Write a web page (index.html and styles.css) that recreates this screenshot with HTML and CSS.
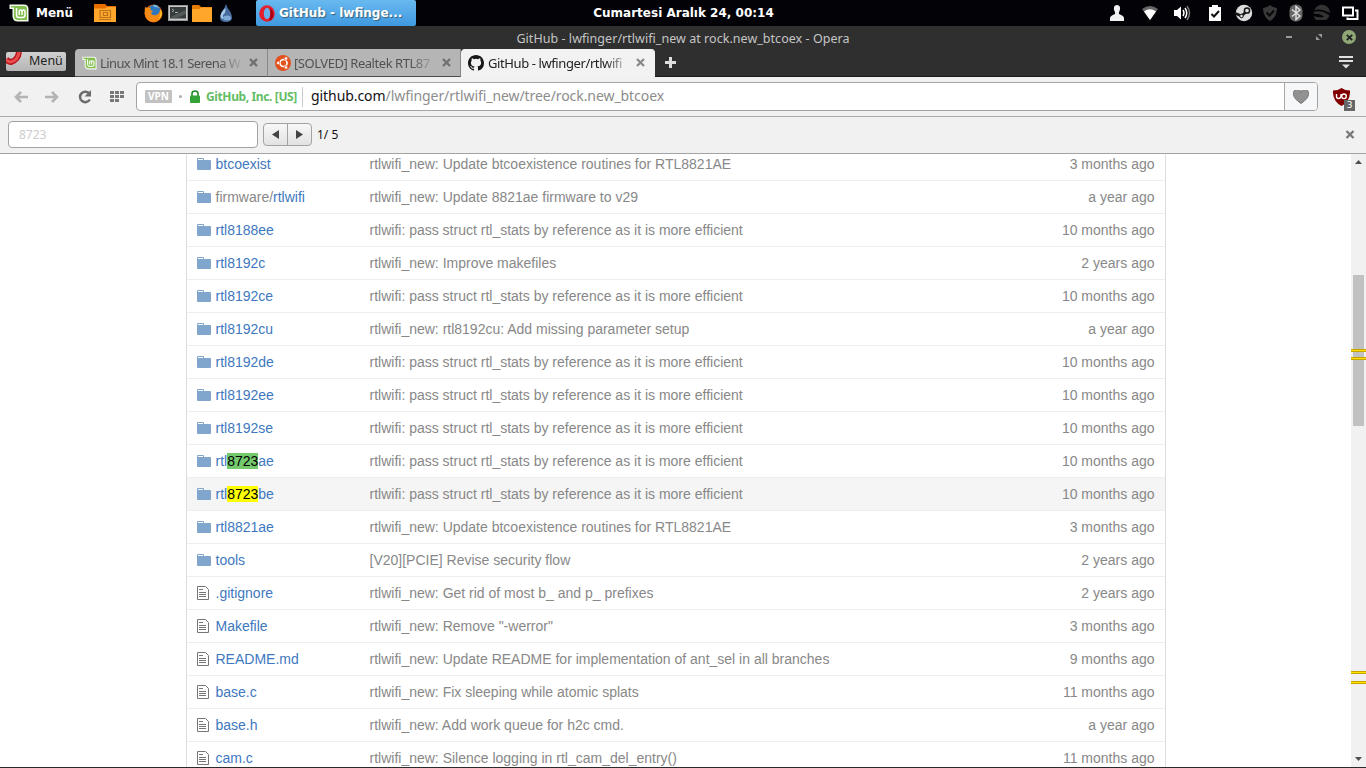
FILE: index.html
```
<!DOCTYPE html>
<html lang="tr">

<head>
    <meta charset="UTF-8">
    <meta name="viewport" content="width=device-width, initial-scale=1.0">
    <title>GitHub - lwfinger/rtlwifi_new at rock.new_btcoex - Opera</title>
    <link rel="stylesheet" href="styles.css">
</head>

<body>
    <svg class="symbols">
        <symbol id="mint" viewBox="0 0 20 18">
            <path d="M.5.5H15Q19.5.5 19.5 5V17.500H9Q3.500 17.500 3.500 12V5H.5Z" fill="#f4f9ee"/>
            <path d="M2 2H15Q18 2 18 5V16H9Q5 16 5 12V3.500H2Z" fill="#82be4c"/>
            <path d="M7.500 4V11Q7.500 13.500 10 13.500H13.500Q16 13.500 16 11V7.500Q16 6 14.500 6T13 7.500V11M13 7.500Q13 6 11.600 6T10.200 7.500V11" fill="none" stroke="#fff" stroke-width="1.500"/>
        </symbol>
        <symbol id="folder" viewBox="0 0 20 17">
            <path d="M0 1Q0 0 1 0H7L9 2H20V6H0Z" fill="#e67a00"/>
            <path d="M0 4H7L9 2.500H20V17H0Z" fill="#ffa62b"/>
        </symbol>
        <symbol id="close" viewBox="0 0 9 9">
            <path d="M1 1L8 8M8 1L1 8" stroke="currentColor" stroke-width="2.300"/>
        </symbol>
        <symbol id="arrow" viewBox="0 0 14 12">
            <path d="M7 1L2 6L7 11M2 6H14" fill="none" stroke="#b4b4b4" stroke-width="2.600"/>
        </symbol>
        <symbol id="dir" viewBox="0 0 14 12">
            <path d="M0 1Q0 0 1 0H6Q7 0 7 1V2H13Q14 2 14 3V11Q14 12 13 12H1Q0 12 0 11ZM1 1V2H6V1Z" fill="#80a6cd" fill-rule="evenodd"/>
        </symbol>
        <symbol id="file" viewBox="0 0 12 14">
            <path d="M.5.5H8.500L11.500 3.500V13.500H.5Z" fill="#fff" stroke="#767676"/>
            <path d="M2 3.500H6M2 6.500H9M2 8.500H9M2 10.500H9" stroke="#767676"/>
        </symbol>
    </svg>

    <div class="panel">
        <div class="launchers">
            <svg class="mint"><use href="#mint"/></svg>
            <span class="menuLabel">Menü</span>
            <span class="desktopFolder">
                <svg width="22" height="18" viewBox="0 0 22 18">
                    <path d="M0 1Q0 0 1 0H11L13 2H22V6H0Z" fill="#e66f00"/>
                    <path d="M0 4.500H11L13 3H22V18H0Z" fill="#ffa62b"/>
                    <path d="M6 6.500H16.500V13.500H6ZM9.500 8.500H13.500V11.500H9.500ZM5 15.500H17" fill="none" stroke="#b8741a" stroke-width="1.200"/>
                </svg>
            </span>
            <svg class="firefox" width="19" height="19" viewBox="0 0 19 19">
                <circle cx="9.500" cy="9.500" r="9" fill="#e66000"/>
                <circle cx="10" cy="8" r="7" fill="#2f77bd"/>
                <path d="M9 1Q13 0 15 4L12 3Q10 4 9 1Z" fill="#75b9e8"/>
                <path d="M1 3L3 4Q5 3 7 4L6 6L9 7L7 9Q8 12 12 11Q16 10 16 5Q19 8 17.500 12Q15 18 9 18Q2 17 .8 10Q.5 6 1 3Z" fill="#f58a14"/>
                <path d="M17 6Q19 12 14 16Q17 12 16.500 7Z" fill="#ffd637"/>
            </svg>
            <svg class="terminal" width="20" height="16" viewBox="0 0 20 16">
                <rect x=".5" y=".5" width="19" height="15" fill="#c9c9c9" stroke="#999"/>
                <rect x="2" y="2" width="16" height="11.500" fill="#363b3b"/>
                <path d="M4 4L6 5.500L4 7M7 7.500H10" fill="none" stroke="#aaa"/>
                <path d="M2 12L18 5V9L8 13.500Z" fill="#525858"/>
            </svg>
            <svg class="files" width="20" height="17"><use href="#folder"/></svg>
            <svg class="drop" width="16" height="18" viewBox="0 0 16 18">
                <path d="M8 0Q9 4 12.500 8Q17 18 8 18Q-1 18 3.500 8Q7 4 8 0Z" fill="#446b9b"/>
                <path d="M7.500 4Q8 9 5 11Q4 14 7 14Q3 16 2.500 12Q3 8 7.500 4Z" fill="#aac9e8"/>
                <ellipse cx="9" cy="14" rx="4" ry="2.500" fill="#7fa7d4"/>
            </svg>
            <div class="task">
                <svg width="16" height="17" viewBox="0 0 16 17">
                    <ellipse cx="8" cy="8.500" rx="7.800" ry="8.200" fill="#e4202c"/>
                    <ellipse cx="8" cy="8.500" rx="3.200" ry="5.800" fill="#63b2ec"/>
                    <path d="M11.200 3Q15.500 7 14 12Q13 15 10 16Q12 12 11.200 3Z" fill="#a70014"/>
                </svg>
                <span>GitHub - lwfinge...</span>
            </div>
        </div>
        <div class="clock">Cumartesi Aralık 24, 00:14</div>
        <div class="tray">
            <svg viewBox="0 0 20 20">
                <path d="M10 2C13.500 2 13.500 6 12.500 8Q11.500 10 12 11Q17 13 17 15V18H3V15Q3 13 8 11Q8.500 10 7.500 8C6.500 6 6.500 2 10 2Z" fill="#f2f2f2"/>
            </svg>
            <svg viewBox="0 0 20 20">
                <path d="M2 6Q10 0 18 6L10 17Z" fill="#666"/>
                <path d="M4 8.500Q10 4 16 8.500L10 17Z" fill="#fff"/>
            </svg>
            <svg viewBox="0 0 20 20">
                <path d="M2 7H5L9 3.500V16.500L5 13H2Z" fill="#fff"/>
                <path d="M11 7Q13 10 11 13M13 5Q16.500 10 13 15" fill="none" stroke="#fff" stroke-width="1.500"/>
                <path d="M15 3Q20 10 15 17" fill="none" stroke="#777" stroke-width="1.500"/>
            </svg>
            <svg viewBox="0 0 20 20">
                <path d="M4 4H7V2H13V4H16V18H4Z" fill="#fff"/>
                <path d="M6.500 11L9 13.500L14 8" fill="none" stroke="#111" stroke-width="2"/>
            </svg>
            <svg viewBox="0 0 20 20">
                <circle cx="10" cy="10" r="8.200" fill="#dcdcdc"/>
                <path d="M1.700 10.500L7.500 13L13 8" fill="none" stroke="#151515" stroke-width="2.500"/>
                <circle cx="13" cy="7.500" r="2.600" fill="#dcdcdc" stroke="#151515" stroke-width="1.500"/>
                <circle cx="7.500" cy="13" r="1.800" fill="#dcdcdc" stroke="#151515"/>
            </svg>
            <svg viewBox="0 0 20 20">
                <path d="M10 2Q13 5 17 5Q17 14 10 18Q3 14 3 5Q7 5 10 2Z" fill="#393939"/>
                <path d="M6.500 9.500L9.500 12.500L14 7.500" fill="none" stroke="#080808" stroke-width="2"/>
            </svg>
            <svg viewBox="0 0 20 20">
                <rect x="3.500" y="1.500" width="13" height="17" rx="6" fill="#666"/>
                <path d="M6 6.500L14 13L10 16.500V3.500L14 7L6 13.500" fill="none" stroke="#e2e2e2" stroke-width="1.400"/>
            </svg>
            <svg viewBox="0 0 20 20">
                <path d="M2.500 7A8 8 0 0 1 18 10Q10 5 2.500 7ZM2 8.500Q11 7 17.500 12.500A8 8 0 0 1 14 17H4Q2 15 2 13Q6 15 12 14Q8 10 2 11Z" fill="#333"/>
            </svg>
            <svg viewBox="0 0 20 20">
                <path d="M3 4.500H13V12.500H3ZM15 7.500H17.500V16H7.500V14.500" fill="none" stroke="#fff" stroke-width="2"/>
            </svg>
        </div>
    </div>

    <div class="titleBar">
        <span class="windowTitle">GitHub - lwfinger/rtlwifi_new at rock.new_btcoex - Opera</span>
        <div class="windowButtons">
            <span class="minimize"></span>
            <svg width="6" height="6" viewBox="0 0 6 6"><path d="M2 0H6V4ZM0 2V6H4Z" fill="#999"/></svg>
            <span class="closeWindow"><svg width="7" height="7"><use href="#close"/></svg></span>
        </div>
    </div>

    <div class="tabBar">
        <div class="operaMenu">
            <svg width="18" height="15" viewBox="0 0 18 15">
                <path d="M13 0Q12 8 5 10Q2 10 0 7" fill="none" stroke="#b8121b" stroke-width="6"/>
                <path d="M13 0Q12 8 5 10Q2 10 0 7" fill="none" stroke="#e84d4d" stroke-width="3"/>
            </svg>
            <span>Menü</span>
        </div>
        <div class="tabs">
            <div class="tab">
                <svg class="tabIcon" width="15" height="14"><use href="#mint"/></svg>
                <span class="tabText mintText">Linux Mint 18.1 Serena W</span>
                <svg class="tabClose"><use href="#close"/></svg>
            </div>
            <div class="tab">
                <svg class="tabIcon" width="16" height="16" viewBox="0 0 16 16">
                    <circle cx="8" cy="8" r="8" fill="#e2501c"/>
                    <circle cx="8.500" cy="8" r="3.500" fill="none" stroke="#fff" stroke-width="1.700"/>
                    <g fill="#fff" stroke="#e2501c" stroke-width=".7">
                        <circle cx="3.200" cy="8" r="1.700"/>
                        <circle cx="11" cy="3.500" r="1.700"/>
                        <circle cx="11" cy="12.500" r="1.700"/>
                    </g>
                </svg>
                <span class="tabText solvedText">[SOLVED] Realtek RTL87</span>
                <svg class="tabClose"><use href="#close"/></svg>
            </div>
            <div class="tab active">
                <svg class="tabIcon" width="16" height="16" viewBox="0 0 16 16">
                    <path d="M8 0C3.580 0 0 3.580 0 8c0 3.540 2.290 6.530 5.470 7.590.4.070.55-.17.55-.38 0-.19-.01-.82-.01-1.490-2.010.37-2.530-.49-2.690-.94-.09-.23-.48-.94-.82-1.130-.28-.15-.68-.52-.01-.53.63-.01 1.080.58 1.230.82.72 1.210 1.870.87 2.330.66.07-.52.28-.87.51-1.070-1.780-.2-3.640-.89-3.640-3.950 0-.87.31-1.590.82-2.150-.08-.2-.36-1.020.08-2.120 0 0 .67-.21 2.200.82a7.600 7.600 0 0 1 4 0c1.530-1.040 2.200-.82 2.200-.82.44 1.100.16 1.920.08 2.120.51.56.82 1.270.82 2.150 0 3.070-1.870 3.750-3.650 3.950.29.25.54.73.54 1.480 0 1.070-.01 1.930-.01 2.200 0 .21.15.46.55.38A8 8 0 0 0 16 8c0-4.420-3.580-8-8-8Z" fill="#181616"/>
                </svg>
                <span class="tabText githubText">GitHub - lwfinger/rtlwifi</span>
                <svg class="tabClose"><use href="#close"/></svg>
            </div>
        </div>
        <svg class="newTab" width="11" height="11" viewBox="0 0 11 11"><path d="M5.500 0V11M0 5.500H11" stroke="#ddd" stroke-width="3"/></svg>
        <svg class="tabMenu" width="14" height="13" viewBox="0 0 14 13">
            <path d="M0 1H14M0 5H14" stroke="#e0e0e0" stroke-width="2"/>
            <path d="M3 8.500H11L7 12.500Z" fill="#e0e0e0"/>
        </svg>
    </div>

    <div class="toolBar">
        <svg class="back" width="14" height="12"><use href="#arrow"/></svg>
        <svg class="forward" width="14" height="12"><use href="#arrow"/></svg>
        <svg class="reload" width="14" height="14" viewBox="0 0 14 14">
            <path d="M11.500 4A5.200 5.200 0 1 0 11.800 9.500" fill="none" stroke="#6c6c6c" stroke-width="2.500"/>
            <path d="M13 0V6.500H6.500Z" fill="#6c6c6c"/>
        </svg>
        <svg class="speedDial" width="14" height="11" viewBox="0 0 14 11">
            <path d="M0 1.500H14M0 5.500H14M0 9.500H9" stroke="#777" stroke-width="3" stroke-dasharray="4 1"/>
        </svg>
        <div class="addressBar">
            <span class="vpn">VPN</span>
            <span class="dot"></span>
            <svg class="lock" width="10" height="13" viewBox="0 0 10 13">
                <path d="M2 6V3.500Q2 1 5 1T8 3.500V6" fill="none" stroke="#258a28" stroke-width="1.600"/>
                <rect y="5.500" width="10" height="7.500" rx="1" fill="#36a338"/>
            </svg>
            <span class="company">GitHub, Inc. [US]</span>
            <span class="url"><b>github.com</b>/lwfinger/rtlwifi_new/tree/rock.new_btcoex</span>
            <span class="heart">
                <svg width="16" height="14" viewBox="0 0 16 14"><path d="M8 13.500Q.5 8.500.5 4.300A3.800 3.800 0 0 1 8 2.500A3.800 3.800 0 0 1 15.500 4.300Q15.500 8.500 8 13.500Z" fill="#929292" stroke="#777"/></svg>
            </span>
        </div>
        <div class="ublock">
            <svg width="17" height="18" viewBox="0 0 17 18">
                <path d="M8.500 0Q12 2.500 17 2.500Q17.500 13 8.500 18Q-.5 13 0 2.500Q5 2.500 8.500 0Z" fill="#800000"/>
                <path d="M3.500 6V8.500Q3.500 10.500 5.500 10.500T8 8.500V6" fill="none" stroke="#fff" stroke-width="1.400"/>
                <circle cx="11" cy="8.300" r="2.300" fill="none" stroke="#fff" stroke-width="1.400"/>
            </svg>
            <span class="count">3</span>
        </div>
    </div>

    <div class="findBar">
        <div class="findInput">8723</div>
        <div class="findButtons">
            <span><svg width="7" height="9" viewBox="0 0 7 9"><path d="M7 0V9L0 4.500Z" fill="#444"/></svg></span>
            <span><svg width="7" height="9" viewBox="0 0 7 9"><path d="M0 0V9L7 4.500Z" fill="#444"/></svg></span>
        </div>
        <span class="matches">1/ 5</span>
        <svg class="findClose" width="10" height="9"><use href="#close"/></svg>
    </div>

    <div class="page">
        <div class="content">
            <div class="fileTable">
                <div class="row"><svg class="dir"><use href="#dir"/></svg><span class="name"><a>btcoexist</a></span><span class="message">rtlwifi_new: Update btcoexistence routines for RTL8821AE</span><span class="age">3 months ago</span></div>
                <div class="row"><svg class="dir"><use href="#dir"/></svg><span class="name">firmware/<a>rtlwifi</a></span><span class="message">rtlwifi_new: Update 8821ae firmware to v29</span><span class="age">a year ago</span></div>
                <div class="row"><svg class="dir"><use href="#dir"/></svg><span class="name"><a>rtl8188ee</a></span><span class="message">rtlwifi: pass struct rtl_stats by reference as it is more efficient</span><span class="age">10 months ago</span></div>
                <div class="row"><svg class="dir"><use href="#dir"/></svg><span class="name"><a>rtl8192c</a></span><span class="message">rtlwifi_new: Improve makefiles</span><span class="age">2 years ago</span></div>
                <div class="row"><svg class="dir"><use href="#dir"/></svg><span class="name"><a>rtl8192ce</a></span><span class="message">rtlwifi: pass struct rtl_stats by reference as it is more efficient</span><span class="age">10 months ago</span></div>
                <div class="row"><svg class="dir"><use href="#dir"/></svg><span class="name"><a>rtl8192cu</a></span><span class="message">rtlwifi_new: rtl8192cu: Add missing parameter setup</span><span class="age">a year ago</span></div>
                <div class="row"><svg class="dir"><use href="#dir"/></svg><span class="name"><a>rtl8192de</a></span><span class="message">rtlwifi: pass struct rtl_stats by reference as it is more efficient</span><span class="age">10 months ago</span></div>
                <div class="row"><svg class="dir"><use href="#dir"/></svg><span class="name"><a>rtl8192ee</a></span><span class="message">rtlwifi: pass struct rtl_stats by reference as it is more efficient</span><span class="age">10 months ago</span></div>
                <div class="row"><svg class="dir"><use href="#dir"/></svg><span class="name"><a>rtl8192se</a></span><span class="message">rtlwifi: pass struct rtl_stats by reference as it is more efficient</span><span class="age">10 months ago</span></div>
                <div class="row"><svg class="dir"><use href="#dir"/></svg><span class="name"><a>rtl<mark class="current">8723</mark>ae</a></span><span class="message">rtlwifi: pass struct rtl_stats by reference as it is more efficient</span><span class="age">10 months ago</span></div>
                <div class="row hovered"><svg class="dir"><use href="#dir"/></svg><span class="name"><a>rtl<mark>8723</mark>be</a></span><span class="message">rtlwifi: pass struct rtl_stats by reference as it is more efficient</span><span class="age">10 months ago</span></div>
                <div class="row"><svg class="dir"><use href="#dir"/></svg><span class="name"><a>rtl8821ae</a></span><span class="message">rtlwifi_new: Update btcoexistence routines for RTL8821AE</span><span class="age">3 months ago</span></div>
                <div class="row"><svg class="dir"><use href="#dir"/></svg><span class="name"><a>tools</a></span><span class="message">[V20][PCIE] Revise security flow</span><span class="age">2 years ago</span></div>
                <div class="row"><svg class="file"><use href="#file"/></svg><span class="name"><a>.gitignore</a></span><span class="message">rtlwifi_new: Get rid of most b_ and p_ prefixes</span><span class="age">2 years ago</span></div>
                <div class="row"><svg class="file"><use href="#file"/></svg><span class="name"><a>Makefile</a></span><span class="message">rtlwifi_new: Remove "-werror"</span><span class="age">3 months ago</span></div>
                <div class="row"><svg class="file"><use href="#file"/></svg><span class="name"><a>README.md</a></span><span class="message">rtlwifi_new: Update README for implementation of ant_sel in all branches</span><span class="age">9 months ago</span></div>
                <div class="row"><svg class="file"><use href="#file"/></svg><span class="name"><a>base.c</a></span><span class="message">rtlwifi_new: Fix sleeping while atomic splats</span><span class="age">11 months ago</span></div>
                <div class="row"><svg class="file"><use href="#file"/></svg><span class="name"><a>base.h</a></span><span class="message">rtlwifi_new: Add work queue for h2c cmd.</span><span class="age">a year ago</span></div>
                <div class="row"><svg class="file"><use href="#file"/></svg><span class="name"><a>cam.c</a></span><span class="message">rtlwifi_new: Silence logging in rtl_cam_del_entry()</span><span class="age">11 months ago</span></div>
            </div>
        </div>
        <div class="scrollBar">
            <svg width="7" height="4" viewBox="0 0 7 4"><path d="M0 4L3.500 0L7 4Z" fill="#505050"/></svg>
            <div class="thumb"></div>
            <svg width="7" height="4" viewBox="0 0 7 4"><path d="M0 0H7L3.500 4Z" fill="#505050"/></svg>
            <i class="tick tick1"></i>
            <i class="tick tick2"></i>
            <i class="tick tick3"></i>
            <i class="tick tick4"></i>
        </div>
    </div>
</body>

</html>
```
FILE: styles.css
```
* {
    box-sizing: border-box;
}

body {
    margin: 0;
    width: 1366px;
    height: 768px;
    overflow: hidden;
    display: flex;
    flex-direction: column;
    font-family: 'Noto Sans', sans-serif;
    background-color: #fff;
    border-bottom: 1px solid #2b2b2b;
}

svg {
    display: block;
    flex: none;
}

span {
    white-space: nowrap;
}

.symbols {
    display: none;
}

/* desktop panel */
.panel {
    height: 26px;
    flex: none;
    display: grid;
    grid-template-columns: 1fr auto 1fr;
    align-items: center;
    background-color: #020207;
    color: #fff;
    font: bold 12px 'DejaVu Sans', sans-serif;
}

.launchers {
    display: flex;
    align-items: center;
    height: 26px;
    padding-left: 9px;
}

.mint {
    width: 20px;
    height: 18px;
}

.menuLabel {
    width: 65px;
    padding-left: 7px;
}

.clock {
    padding-left: 1px;
}

.firefox {
    margin-left: 28px;
}

.terminal {
    margin-left: 5px;
}

.files {
    margin-left: 4px;
}

.drop {
    margin-left: 6px;
}

.task {
    display: flex;
    align-items: center;
    width: 160px;
    height: 26px;
    margin-left: 22px;
    padding-left: 3px;
    gap: 4px;
    border-radius: 2px;
    background: linear-gradient(#69b9f0, #3f99df);
    text-shadow: 1px 1px 1px #38607d;
}

.tray {
    display: flex;
    justify-content: flex-end;
    padding-right: 6px;
}

.tray svg {
    width: 20px;
    height: 20px;
    margin-left: 6px;
}

.tray svg:nth-child(2),
.tray svg:nth-child(4) {
    margin-left: 13px;
}

.tray svg:nth-child(3) {
    margin-left: 12px;
}

.tray svg:nth-child(5) {
    margin-left: 9px;
}

.tray svg:last-child {
    margin-left: 8px;
}

/* window frame */
.titleBar {
    position: relative;
    height: 22px;
    flex: none;
    display: flex;
    justify-content: center;
    align-items: center;
    padding-top: 2px;
    background-color: #2f2f2f;
    color: #c5c5c5;
    font-size: 12.5px;
    letter-spacing: 0.04px;
}

.windowButtons {
    position: absolute;
    right: 10px;
    top: 4px;
    display: flex;
    align-items: center;
}

.minimize {
    width: 6px;
    height: 2px;
    margin-right: 24px;
    background-color: #999;
}

.closeWindow {
    display: grid;
    place-items: center;
    width: 14px;
    height: 14px;
    margin-left: 20px;
    border-radius: 50%;
    background-color: #8fa876;
    color: #222;
}

.tabBar {
    display: flex;
    align-items: center;
    height: 29px;
    flex: none;
    background-color: #2f2f2f;
    border-bottom: 1px solid #1c1a1c;
}

.operaMenu {
    display: flex;
    align-items: center;
    gap: 5px;
    width: 60px;
    height: 19px;
    margin: 0 9px 2px 6px;
    border-radius: 2px;
    overflow: hidden;
    background: linear-gradient(#d0d0d0, #b5b5b5);
    color: #222;
    font-size: 12.5px;
    line-height: 17px;
}

.operaMenu svg {
    align-self: flex-start;
}

.operaMenu span {
    padding-bottom: 2px;
}

.tabs {
    display: flex;
    align-self: flex-end;
    height: 28px;
    margin-bottom: -1px;
}

.tab {
    display: flex;
    align-items: center;
    width: 193px;
    padding: 0 9px 0 7px;
    background-color: #b5b5b5;
    border-bottom: 1px solid #4c4c4c;
    border-right: 1px solid #888;
    color: #515151;
    font-size: 13px;
}

.tab:first-child {
    border-top-left-radius: 4px;
}

.tab.active {
    width: 194px;
    background-color: #f2f2f2;
    border-color: #f2f2f2;
    border-radius: 4px 4px 0 0;
    color: #222;
}

.tabText {
    flex: 1;
    margin: 0 5px 0 3px;
    -webkit-mask-image: linear-gradient(to right, #000 82%, transparent);
    mask-image: linear-gradient(to right, #000 82%, transparent);
}

.mintText {
    letter-spacing: -0.6px;
}

.solvedText {
    letter-spacing: -0.45px;
}

.githubText {
    margin-left: 4px;
    letter-spacing: -0.4px;
}

.tabClose {
    width: 9px;
    height: 9px;
    color: #707070;
}

.active .tabClose {
    color: #8a8a8a;
}

.newTab {
    margin-left: 10px;
}

.tabMenu {
    margin: 0 13px 0 auto;
}

/* address bar */
.toolBar {
    display: flex;
    align-items: center;
    height: 40px;
    flex: none;
    padding-left: 14px;
    background-color: #f1f1f1;
    border-bottom: 1px solid #aaa;
}

.forward {
    margin-left: 17px;
    transform: scaleX(-1);
}

.reload {
    margin-left: 19px;
}

.speedDial {
    margin-left: 18px;
}

.addressBar {
    display: flex;
    align-items: center;
    width: 1182px;
    height: 29px;
    margin-left: 12px;
    border: 1px solid #a3a3a3;
    border-radius: 4px;
    background-color: #fff;
}

.vpn {
    width: 27px;
    height: 13px;
    margin-left: 8px;
    border-radius: 1px;
    background-color: #c2c2c2;
    color: #fff;
    font-size: 10px;
    font-weight: bold;
    line-height: 13px;
    text-align: center;
}

.dot {
    width: 3px;
    height: 3px;
    margin-left: 7px;
    border-radius: 50%;
    background-color: #aaa;
}

.lock {
    margin-left: 8px;
}

.company {
    width: 97px;
    margin-left: 6px;
    border-right: 1px solid #ccc;
    color: #63bd65;
    font-size: 12px;
    font-weight: bold;
    letter-spacing: -0.38px;
    line-height: 20px;
}

.url {
    padding: 0 0 2px 8px;
    color: #8d8d8d;
    font-size: 14px;
    letter-spacing: -0.07px;
}

.url b {
    font-weight: normal;
    color: #111;
}

.heart {
    display: grid;
    place-items: center;
    width: 33px;
    height: 27px;
    margin-left: auto;
    border-left: 1px solid #aaa;
    border-radius: 0 3px 3px 0;
    background-color: #f6f7f8;
}

.ublock {
    position: relative;
    margin-left: 15px;
}

.count {
    position: absolute;
    left: 11px;
    top: 12px;
    width: 11px;
    height: 11px;
    background-color: #666;
    color: #fff;
    font: 9px/11px 'DejaVu Sans', sans-serif;
    text-align: center;
}

/* find in page */
.findBar {
    display: flex;
    align-items: center;
    height: 37px;
    flex: none;
    padding: 0 11px 1px 8px;
    background-color: #f1f1f1;
    border-bottom: 1px solid #a3a3a3;
    font-size: 12px;
}

.findInput {
    width: 250px;
    height: 27px;
    padding-left: 10px;
    border: 1px solid #a3a3a3;
    border-radius: 4px;
    background-color: #fff;
    color: #ccc;
    line-height: 25px;
}

.findButtons {
    display: flex;
    width: 49px;
    height: 23px;
    margin-left: 5px;
    border: 1px solid #a3a3a3;
    border-radius: 4px;
    background: linear-gradient(#f8f8f8, #e2e2e2);
}

.findButtons span {
    display: grid;
    place-items: center;
    flex: 1;
}

.findButtons span + span {
    border-left: 1px solid #a3a3a3;
}

.matches {
    margin-left: 5px;
    color: #111;
}

.findClose {
    margin-left: auto;
    color: #777;
}

/* page */
.page {
    display: flex;
    flex: 1;
    min-height: 0;
}

.content {
    flex: 1;
    overflow: hidden;
}

.fileTable {
    width: 980px;
    margin: -6px 0 0 186px;
    border: solid #ddd;
    border-width: 0 1px;
    font-family: 'Liberation Sans', Arial, sans-serif;
    font-size: 14px;
    color: #888;
}

.row {
    display: flex;
    align-items: center;
    height: 33px;
    padding: 0 10.5px 0 10px;
    border-bottom: 1px solid #eee;
}

.row.hovered {
    background-color: #f5f5f5;
}

.dir {
    width: 14px;
    height: 12px;
    margin-right: 4.5px;
}

.file {
    width: 12px;
    height: 14px;
    margin-right: 6.5px;
}

.name {
    width: 154px;
}

.name a {
    color: #4078c0;
}

mark {
    background-color: #ff0;
    color: #000;
}

mark.current {
    background-color: #73c96b;
}

.age {
    margin-left: auto;
}

.scrollBar {
    position: relative;
    display: flex;
    flex-direction: column;
    justify-content: space-between;
    align-items: center;
    width: 15px;
    padding: 6px 0;
    background-color: #f1f1f1;
}

.thumb {
    width: 11px;
    height: 151px;
    margin: 111px 0 auto;
    background-color: #c1c1c1;
}

.tick {
    position: absolute;
    left: 0;
    width: 15px;
    height: 3px;
    background-color: #ffe100;
    border: solid #c9a400;
    border-width: 1px 0;
}

.tick1 {
    top: 195px;
}

.tick2 {
    top: 203px;
}

.tick3 {
    top: 517px;
}

.tick4 {
    top: 527px;
}
```
